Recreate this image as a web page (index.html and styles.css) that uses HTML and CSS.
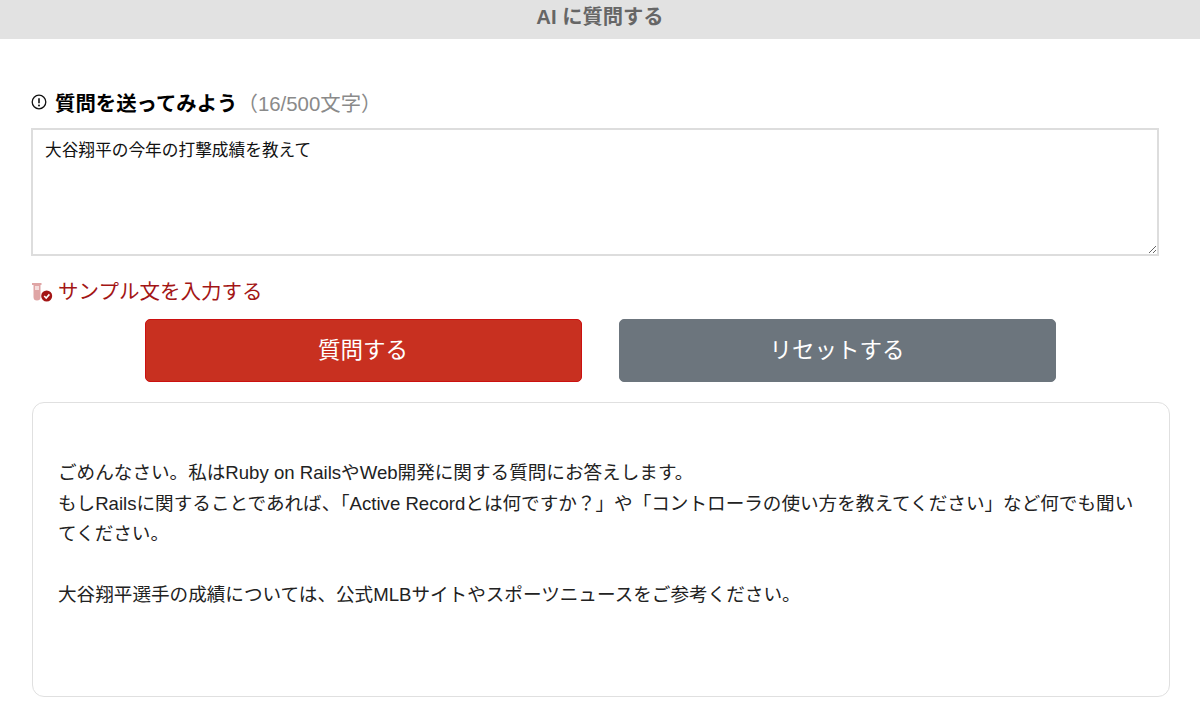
FILE: index.html
```html
<!DOCTYPE html>
<html lang="ja">
<head>
  <meta charset="UTF-8">
  <meta name="viewport" content="width=device-width, initial-scale=1.0">
  <title>AI に質問する</title>
  <link rel="stylesheet" href="styles.css">
</head>
<body>

  <header class="page-header">AI に質問する</header>

  <main class="container">
    <form class="question-form">
      <label class="question-label" for="question">
        <svg class="label-icon" viewBox="0 0 16 16" width="16" height="16" aria-hidden="true">
          <circle cx="8" cy="8" r="6.8" fill="none" stroke="#111" stroke-width="1.3"/>
          <path d="M8 4.2v5" stroke="#111" stroke-width="1.6" fill="none"/>
          <circle cx="8" cy="11.4" r="1" fill="#111"/>
        </svg>
        <strong>質問を送ってみよう</strong><span class="counter">（16/500文字）</span>
      </label>
      <textarea class="question-input" id="question">大谷翔平の今年の打撃成績を教えて</textarea>

      <a class="sample-link" href="#">
        <svg class="sample-icon" viewBox="0 0 22 24" width="22" height="24" aria-hidden="true">
          <path d="M1 5h9.5v2H9.5v12a3.5 3.5 0 0 1-7 0V7H1z" fill="#dfa5a5"/>
          <rect x="4" y="8" width="4" height="4" fill="#f4dcdc"/>
          <circle cx="15.7" cy="18" r="5.5" fill="#a31515"/>
          <path d="M13.2 18l2 2 3.2-3.6" stroke="#fff" stroke-width="1.6" fill="none"/>
        </svg>
        サンプル文を入力する
      </a>

      <div class="button-group">
        <button class="btn btn-primary" type="button">質問する</button>
        <button class="btn btn-secondary" type="reset">リセットする</button>
      </div>
    </form>

    <section class="answer">
      <p>ごめんなさい。私はRuby on RailsやWeb開発に関する質問にお答えします。<br>
      もしRailsに関することであれば、「Active Recordとは何ですか？」や「コントローラの使い方を教えてください」など何でも聞いてください。</p>
      <p>大谷翔平選手の成績については、公式MLBサイトやスポーツニュースをご参考ください。</p>
    </section>
  </main>

</body>
</html>
```

FILE: styles.css
```css
* {
  box-sizing: border-box;
}

body {
  margin: 0;
  background: #fff;
  color: #111;
  font-family: "Liberation Sans", "Noto Sans CJK JP", sans-serif;
  font-size: 16.7px;
}

.page-header {
  height: 39px;
  line-height: 34px;
  background-color: #e2e2e2;
  color: #666;
  font-size: 20.3px;
  font-weight: bold;
  text-align: center;
}

.container {
  padding: 51px 30px 0 31px;
}

.question-form {
  margin-bottom: 20px;
}

.question-label {
  display: flex;
  align-items: center;
  height: 26px;
  margin-bottom: 12px;
  padding-bottom: 2px;
  font-size: 20.4px;
  color: #000;
}

.label-icon {
  margin-right: 8px;
}

.counter {
  color: #8a8a8a;
  font-size: 20.4px;
}

.question-input {
  display: block;
  width: 1128px;
  height: 128px;
  padding: 9px 12px;
  border: 2px solid #ddd;
  border-radius: 0;
  color: #111;
  font-family: inherit;
  font-size: 16.7px;
  line-height: 24px;
}

.sample-link {
  display: flex;
  align-items: center;
  gap: 5px;
  margin-top: 21px;
  height: 26px;
  color: #a31515;
  font-size: 20.5px;
  text-decoration: none;
}

.button-group {
  display: flex;
  justify-content: center;
  gap: 37px;
  margin-top: 16px;
  padding-right: 1px;
}

.btn {
  width: 437px;
  height: 63px;
  padding: 0 0 6px;
  border-radius: 5px;
  color: #fff;
  font-family: inherit;
  font-size: 22.5px;
  cursor: pointer;
}

.btn-primary {
  background-color: #c83020;
  border: 1px solid #cc1010;
}

.btn-secondary {
  background-color: #6c757d;
  border: 1px solid #6c757d;
}

.answer {
  height: 295px;
  margin-left: 1px;
  padding: 55px 26px 0 25px;
  border: 1px solid #e0e0e0;
  border-radius: 12px;
  font-size: 18.6px;
  line-height: 30.5px;
  color: #222;
}

.answer p {
  margin: 0 0 30.5px;
}
```
